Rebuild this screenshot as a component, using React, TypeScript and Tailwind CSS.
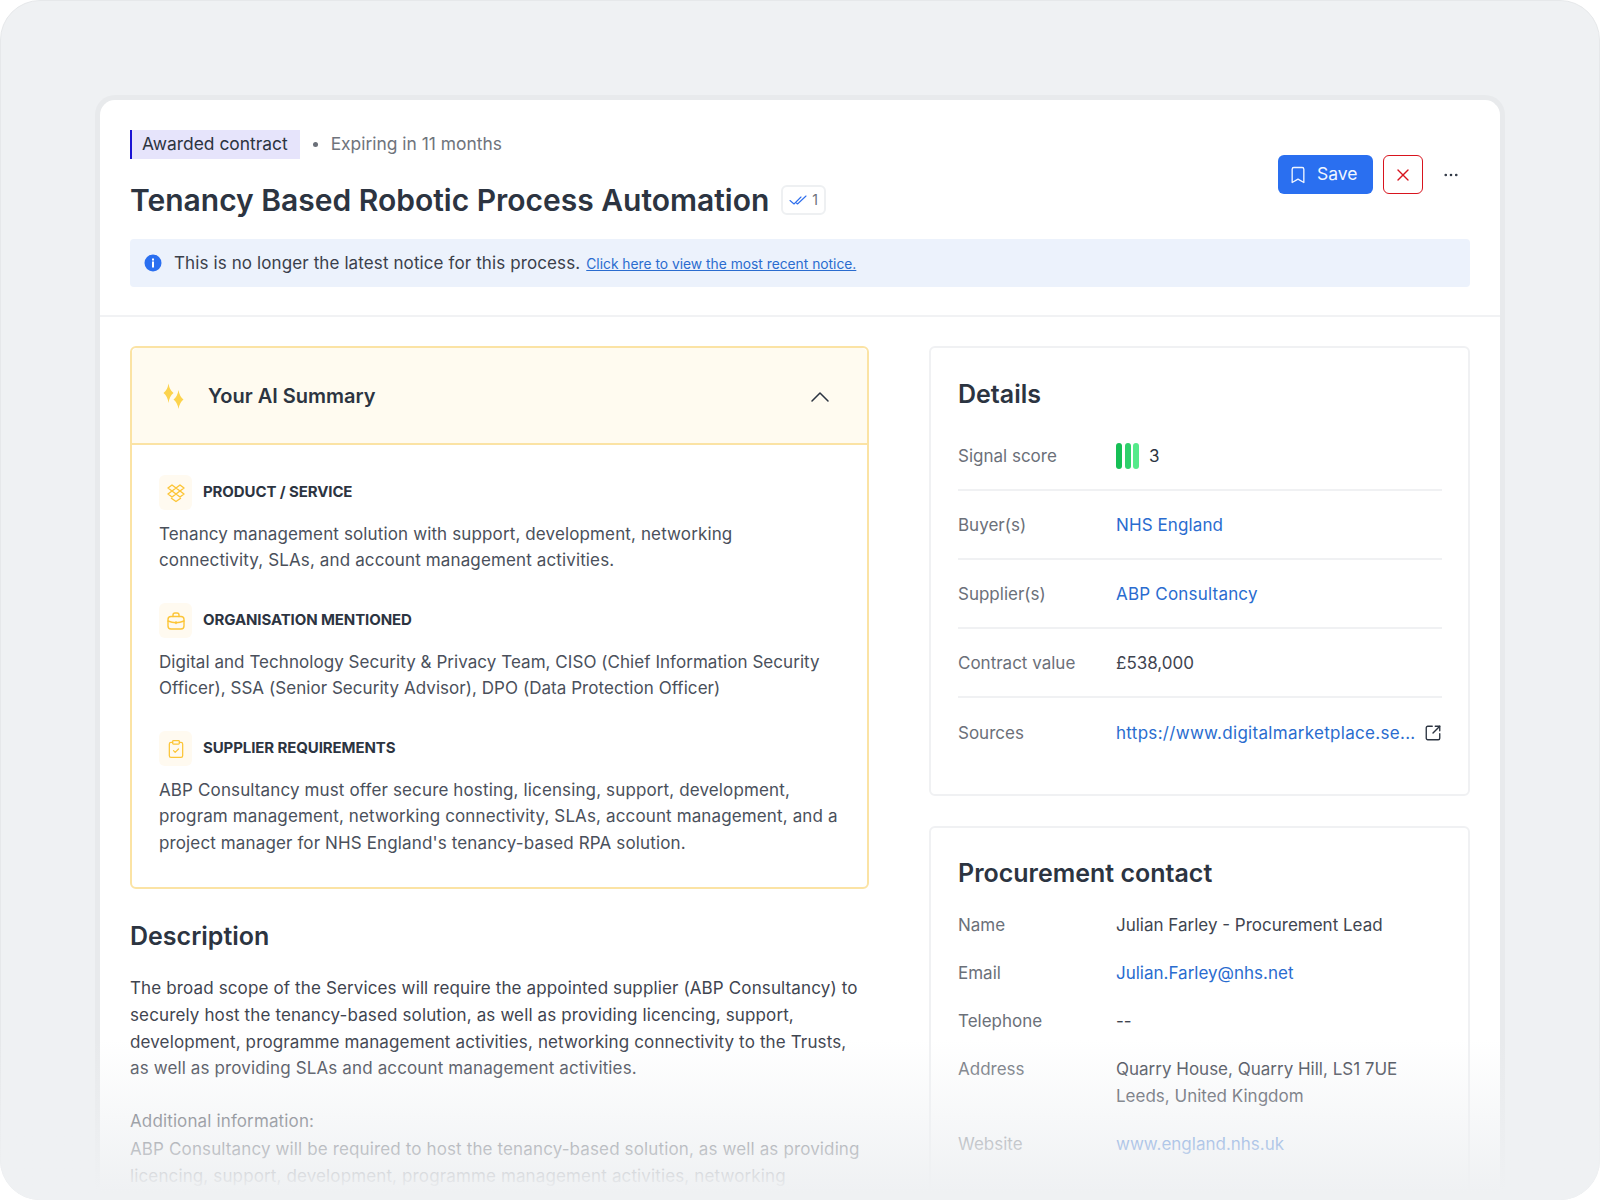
import React from 'react';
import { Bookmark, X, Ellipsis, ChevronUp, ClipboardCheck, SquareArrowOutUpRight } from 'lucide-react';

const Sparkles = () => (
  <svg width="24" height="28" viewBox="0 0 24 28" fill="#fcd34d">
    <path d="M6.500 0.500 Q7.500 7 11.500 10 Q7.500 13 6.500 20 Q5.500 13 1.500 10 Q5.500 7 6.500 0.500 Z" />
    <path d="M16.500 7 Q17.500 13.500 21.500 16.500 Q17.500 19.500 16.500 26 Q15.500 19.500 11.500 16.500 Q15.500 13.500 16.500 7 Z" />
  </svg>
);

const BoxIcon = () => (
  <svg width="20" height="20" viewBox="0 0 20 20" fill="none" stroke="currentColor" strokeWidth="1.400" strokeLinejoin="round">
    <path d="M6 2 L10 5 L6 8 L2 5 Z" />
    <path d="M14 2 L18 5 L14 8 L10 5 Z" />
    <path d="M6 8 L10 11 L6 14 L2 11 Z" />
    <path d="M14 8 L18 11 L14 14 L10 11 Z" />
    <path d="M5 15 L10 18.500 L15 15" />
  </svg>
);

const CaseIcon = () => (
  <svg width="20" height="20" viewBox="0 0 20 20" fill="none" stroke="currentColor" strokeWidth="1.400" strokeLinejoin="round" strokeLinecap="round">
    <rect x="2" y="5.500" width="16" height="12.500" rx="3" />
    <path d="M7 5.500 V4 a2 2 0 0 1 2 -2 h2 a2 2 0 0 1 2 2 V5.500" />
    <path d="M2 10 Q10 13.500 18 10" />
    <path d="M10 10.800 V12.600" />
  </svg>
);

const DoubleCheck = () => (
  <svg width="18" height="12" viewBox="0 0 18 12" fill="none" stroke="#2f6fed" strokeWidth="1.100" strokeLinecap="round" strokeLinejoin="round">
    <path d="M1 6.500 L5 10 L12 3" />
    <path d="M7.500 9 L8.500 10 L17 2" />
  </svg>
);

const SummarySection = ({ icon, title, children }: { icon: React.ReactNode; title: string; children: React.ReactNode }) => (
  <div>
    <div className="flex items-center gap-[11px]">
      <div className="w-[33px] h-[35px] rounded-md bg-[#fffaf0] flex items-center justify-center text-[#fcc537]">{icon}</div>
      <div className="text-[15px] font-bold text-[#2c3441] tracking-[-0.1px]">{title}</div>
    </div>
    <p className="mt-[10.500px] text-[#4a505b] tracking-[0.13px]">{children}</p>
  </div>
);

const DetailRow = ({ label, children, last }: { label: string; children: React.ReactNode; last?: boolean }) => (
  <div className={`flex items-center h-[69px] pt-[1px] ${last ? '' : 'border-b-2 border-[#f0f1f3]'}`}>
    <div className="w-[158px] text-[#6b7079]">{label}</div>
    <div className="flex-1 min-w-0">{children}</div>
  </div>
);

const ContactRow = ({ label, children }: { label: string; children: React.ReactNode }) => (
  <div className="flex">
    <div className="w-[158px] text-[#6b7079]">{label}</div>
    <div className="flex-1 text-[#3f4550]">{children}</div>
  </div>
);

export default function App() {
  return (
    <div className="w-[1600px] h-[1200px] overflow-hidden relative bg-white font-['Inter',sans-serif] text-[17px] leading-[26.500px]">
      <div className="h-full rounded-[40px] border border-[#e6e8ea] bg-[#eff1f3] pt-[94px] px-[94px] overflow-hidden">
        <div className="border-[5px] border-b-0 border-[#e8eaec] rounded-t-[20px] bg-white h-[1300px]">
          <div className="px-[30px] pt-[30px] pb-[28px] border-b-2 border-[#f1f2f4]">
            <div className="flex justify-between">
              <div>
                <div className="flex items-center text-[17.400px]">
                  <span className="h-[29px] pl-[10px] pr-[12px] flex items-center bg-[#e6e4fb] border-l-2 border-[#1a12d4] text-[#2c3441]">Awarded contract</span>
                  <span className="w-[5px] h-[5px] rounded-full bg-[#6b7079] ml-[13px] mr-[13px]"></span>
                  <span className="text-[#6f747c]">Expiring in 11 months</span>
                </div>
                <div className="flex items-center mt-[20px]">
                  <h1 className="text-[30px] leading-[42px] font-semibold text-[#2c3441]">Tenancy Based Robotic Process Automation</h1>
                  <span className="ml-[12px] h-[30px] px-[6px] flex items-center gap-[5px] border-2 border-[#eef0f2] rounded-md text-[14px] text-[#6b7079]">
                    <DoubleCheck />1
                  </span>
                </div>
              </div>
              <div className="flex items-center h-[39px] mt-[25px] mr-[10px]">
                <button className="w-[95px] h-[39px] rounded-md bg-[#2a6ff0] text-[#f1f6ff] text-[17.500px] flex items-center pl-[10px] gap-[9px]">
                  <Bookmark size={20} strokeWidth={1.600} />
                  Save
                </button>
                <button className="w-[40px] h-[39px] ml-[10px] rounded-md border border-[#d8141e] flex items-center justify-center text-[#d8141e]">
                  <X size={20} strokeWidth={1.600} />
                </button>
                <Ellipsis size={18} strokeWidth={1.500} className="ml-[19px] text-[#2c3441]" />
              </div>
            </div>
            <div className="mt-[18px] h-[48px] rounded bg-[#ecf2fc] flex items-center pl-[14px] text-[#3a404b]">
              <svg width="18" height="18" viewBox="0 0 18 18" className="mr-[12px]">
                <circle cx="9" cy="9" r="8.500" fill="#2a6ff0" />
                <rect x="8" y="7.500" width="2" height="6" fill="#fff" />
                <rect x="8" y="4.500" width="2" height="2" fill="#fff" />
              </svg>
              <span className="tracking-[0.11px]">This is no longer the latest notice for this process.</span>
              <a className="ml-[6px] mt-[3px] text-[13.800px] text-[#2a6ccf] underline">Click here to view the most recent notice.</a>
            </div>
          </div>

          <div className="grid grid-cols-[739px_541px] gap-[60px] px-[30px] pt-[29px]">
            <div>
              <div className="border-2 border-[#fbe3a4] rounded-md">
                <div className="h-[97px] pt-[2px] bg-[#fffbf0] border-b-2 border-[#fbe3a4] flex items-center pl-[30px] pr-[31px] rounded-t-md">
                  <Sparkles />
                  <div className="ml-[22px] flex-1 text-[20px] font-semibold text-[#2c3441]">Your AI Summary</div>
                  <ChevronUp size={32} strokeWidth={1.150} className="text-[#2c3441]" />
                </div>
                <div className="pt-[30px] pb-[31px] pl-[27px] pr-[20px] flex flex-col gap-[29.500px]">
                  <SummarySection icon={<BoxIcon />} title="PRODUCT / SERVICE">
                    Tenancy management solution with support, development, networking<br />connectivity, SLAs, and account management activities.
                  </SummarySection>
                  <SummarySection icon={<CaseIcon />} title="ORGANISATION MENTIONED">
                    <span className="tracking-[0.05px]">Digital and Technology Security &amp; Privacy Team, CISO (Chief Information Security Officer), SSA (Senior Security Advisor), DPO (Data Protection Officer)</span>
                  </SummarySection>
                  <SummarySection icon={<ClipboardCheck size={20} strokeWidth={1.500} />} title="SUPPLIER REQUIREMENTS">
                    ABP Consultancy must offer secure hosting, licensing, support, development, program management, networking connectivity, SLAs, account management, and a project manager for NHS England's tenancy-based RPA solution.
                  </SummarySection>
                </div>
              </div>
              <h2 className="mt-[29px] text-[25px] leading-[36px] font-semibold text-[#2c3441]">Description</h2>
              <div className="mt-[21px] text-[#3f4550] pr-[8px] tracking-[0.13px] leading-[26.800px]">
                <p>The broad scope of the Services will require the appointed supplier (ABP Consultancy) to securely host the tenancy-based solution, as well as providing licencing, support, development, programme management activities, networking connectivity to the Trusts, as well as providing SLAs and account management activities.</p>
                <p className="mt-[26px]">Additional information:</p>
                <p className="mt-[1px]">ABP Consultancy will be required to host the tenancy-based solution, as well as providing licencing, support, development, programme management activities, networking</p>
              </div>
            </div>

            <div className="flex flex-col gap-[30px]">
              <div className="border-2 border-[#f0f1f3] rounded-md pl-[27px] pr-[26px] pt-[28px] h-[450px]">
                <h2 className="text-[25px] leading-[36px] font-semibold text-[#2c3441]">Details</h2>
                <div className="mt-[10px]">
                  <DetailRow label="Signal score">
                    <div className="flex items-center text-[#2c3441]">
                      <div className="flex gap-[2.500px] mr-[10px]">
                        <span className="w-[6px] h-[26px] rounded-full bg-[#16bf55]"></span>
                        <span className="w-[6px] h-[26px] rounded-full bg-[#2fd06c]"></span>
                        <span className="w-[6px] h-[26px] rounded-full bg-[#55ea8a]"></span>
                      </div>
                      3
                    </div>
                  </DetailRow>
                  <DetailRow label="Buyer(s)"><a className="text-[#2a6ccf] tracking-[0.1px]">NHS England</a></DetailRow>
                  <DetailRow label="Supplier(s)"><a className="text-[#2a6ccf] tracking-[0.2px]">ABP Consultancy</a></DetailRow>
                  <DetailRow label="Contract value"><span className="text-[#3f4550]">£538,000</span></DetailRow>
                  <DetailRow label="Sources" last>
                    <div className="flex items-center justify-between">
                      <a className="text-[#2a6ccf] tracking-[0.3px]">https://www.digitalmarketplace.se...</a>
                      <SquareArrowOutUpRight size={18} strokeWidth={1.800} className="text-[#2c3441]" />
                    </div>
                  </DetailRow>
                </div>
              </div>
              <div className="border-2 border-[#f0f1f3] rounded-md pl-[27px] pr-[26px] pt-[27px] pb-[40px]">
                <h2 className="text-[25px] leading-[36px] font-semibold text-[#2c3441]">Procurement contact</h2>
                <div className="mt-[21px] flex flex-col gap-[21.500px]">
                  <ContactRow label="Name">Julian Farley - Procurement Lead</ContactRow>
                  <ContactRow label="Email"><a className="text-[#2a6ccf]">Julian.Farley@nhs.net</a></ContactRow>
                  <ContactRow label="Telephone">--</ContactRow>
                  <ContactRow label="Address">Quarry House, Quarry Hill, LS1 7UE<br />Leeds, United Kingdom</ContactRow>
                  <ContactRow label="Website"><a className="text-[#2a6ccf]">www.england.nhs.uk</a></ContactRow>
                </div>
              </div>
            </div>
          </div>
        </div>
      </div>
      {/* fade over the bottom of the window */}
      <div className="absolute left-0 right-0 bottom-0 h-[160px] rounded-b-[40px] bg-gradient-to-b from-[#eff1f300] to-[#eff1f3] to-95%"></div>
    </div>
  );
}
